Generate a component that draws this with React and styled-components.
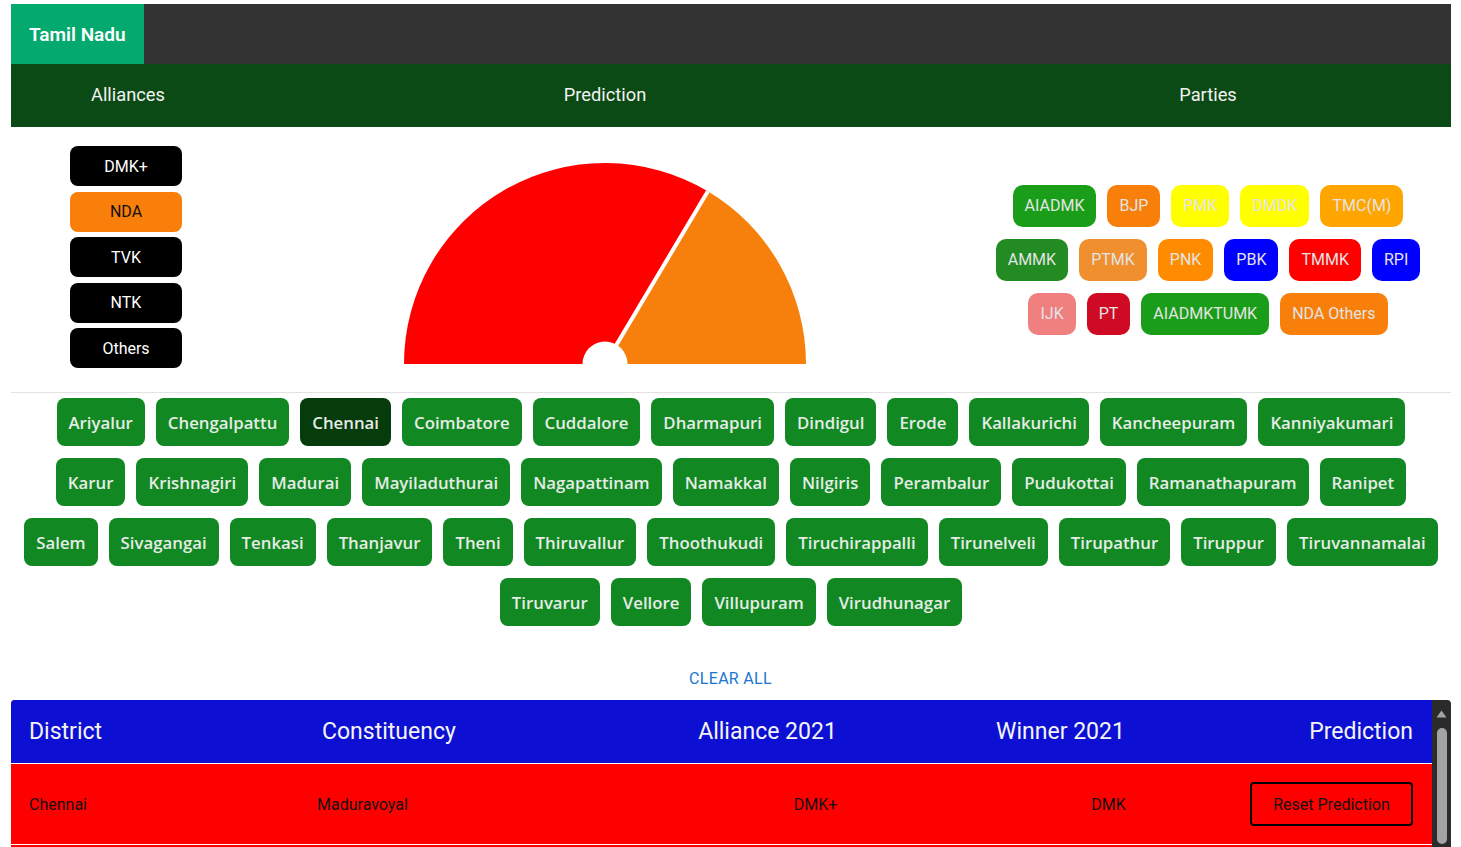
import React from "react";
import styled, { createGlobalStyle } from "styled-components";

const GlobalStyle = createGlobalStyle`
  html, body { margin: 0; padding: 0; overflow: hidden; background: #fff; }
  body { font-family: Roboto, "Liberation Sans", sans-serif; }
  * { box-sizing: border-box; }
`;

const Page = styled.div`
  width: 1461px;
  padding: 4px 10px 0 11px;
`;

const TopBar = styled.div`
  display: flex;
  height: 60px;
  background: #333333;
`;

const StateTab = styled.div`
  display: flex;
  align-items: center;
  padding: 0 18px;
  background: #04a96d;
  color: #fff;
  font-size: 19px;
  font-weight: 600;
`;

const Columns = styled.div`
  display: grid;
  grid-template-columns: 234px 720px 1fr;
`;

const NavBar = styled(Columns)`
  height: 63px;
  background: #0b4a14;
  align-items: center;
`;

const NavLabel = styled.div`
  text-align: center;
  color: #f2f2f2;
  font-size: 18.3px;
  margin-top: -2px;
`;

const Main = styled(Columns)`
  height: 266px;
  align-items: center;
  border-bottom: 1px solid #e2e2e2;
`;

const AllianceList = styled.div`
  display: flex;
  flex-direction: column;
  align-items: center;
  gap: 5.5px;
  padding-right: 4px;
  margin-top: -5px;
`;

const AllianceButton = styled.div`
  width: 112px;
  height: 40px;
  border-radius: 8px;
  display: flex;
  align-items: center;
  justify-content: center;
  background: ${(p) => p.$bg};
  color: ${(p) => p.$fg};
  font-size: 16px;
`;

const GaugeWrap = styled.div`
  display: flex;
  justify-content: center;
  padding-top: 8px;
`;

const PartyWrap = styled.div`
  display: flex;
  flex-wrap: wrap;
  justify-content: center;
  gap: 12px 11px;
  padding: 0 24px;
`;

const PartyPill = styled.div`
  height: 42px;
  padding: 0 12px;
  border-radius: 10px;
  display: flex;
  align-items: center;
  background: ${(p) => p.$bg};
  color: #e4e4e4;
  font-size: 16px;
`;

const Districts = styled.div`
  display: flex;
  flex-direction: column;
  gap: 12px;
  padding: 5px 10px 0;
`;

const DistrictRow = styled.div`
  display: flex;
  justify-content: center;
  gap: 11px;
`;

const DistrictButton = styled.div`
  height: 48px;
  padding: 0 12px;
  border-radius: 8px;
  display: flex;
  align-items: center;
  background: ${(p) => (p.$active ? "#063b0b" : "#118822")};
  color: #e6ece6;
  font-family: "Open Sans", "Noto Sans", sans-serif;
  font-weight: 600;
  font-size: 16.8px;
`;

const ClearRow = styled.div`
  display: flex;
  justify-content: center;
  margin-top: 34px;
  padding-right: 1px;
`;

const ClearButton = styled.div`
  height: 36px;
  display: flex;
  align-items: center;
  padding: 0 8px;
  color: #1976d2;
  font-size: 16px;
  letter-spacing: 0.3px;
  text-transform: uppercase;
`;

const TableFrame = styled.div`
  margin-top: 4px;
  display: flex;
  height: 147px;
  border-radius: 4px 4px 0 0;
  overflow: hidden;
`;

const TableMain = styled.div`
  flex: 1;
  display: flex;
  flex-direction: column;
  background: #ff0000;
`;

const HeadRow = styled.div`
  display: grid;
  grid-template-columns: 293px 293px 342px 244px 1fr;
  align-items: center;
  height: 64px;
  flex-shrink: 0;
  background: #0d10d2;
  border-bottom: 1px solid #fff;
  color: #f4f4f4;
  font-size: 23px;
`;

const HeadCell = styled.div`
  padding: 0 19px 0 18px;
  text-align: ${(p) => p.$align || "left"};
`;

const BodyRow = styled.div`
  display: grid;
  grid-template-columns: 288px 347px 340px 246px 1fr;
  align-items: center;
  height: 81px;
  flex-shrink: 0;
  background: #ff0000;
  border-bottom: 1px solid #fff;
  color: #111;
  font-size: 16px;
`;

const BodyCell = styled.div`
  padding: 0 19px 0 18px;
  display: flex;
  justify-content: ${(p) => p.$justify || "flex-start"};
`;

const ResetButton = styled.div`
  width: 163px;
  height: 44px;
  border: 2px solid #000;
  border-radius: 4px;
  display: flex;
  align-items: center;
  justify-content: center;
  color: #111;
  font-size: 16px;
`;

const ScrollTrack = styled.div`
  width: 19px;
  flex-shrink: 0;
  background: #2b2b2b;
  display: flex;
  flex-direction: column;
  align-items: center;
  padding-top: 10px;
`;

const ScrollThumb = styled.div`
  width: 10px;
  height: 116px;
  margin-top: 10px;
  border-radius: 5px;
  background: #a3a3a3;
`;

const alliances = [
  { name: "DMK+", bg: "#000", fg: "#fff" },
  { name: "NDA", bg: "#f77f0a", fg: "#111" },
  { name: "TVK", bg: "#000", fg: "#fff" },
  { name: "NTK", bg: "#000", fg: "#fff" },
  { name: "Others", bg: "#000", fg: "#fff" },
];

const parties = [
  ["AIADMK", "#1a9e1a"],
  ["BJP", "#f77f0a"],
  ["PMK", "#ffff00"],
  ["DMDK", "#ffff00"],
  ["TMC(M)", "#ffa500"],
  ["AMMK", "#228b22"],
  ["PTMK", "#f08f2e"],
  ["PNK", "#ff8c00"],
  ["PBK", "#0000ff"],
  ["TMMK", "#ff0000"],
  ["RPI", "#0000ff"],
  ["IJK", "#f08080"],
  ["PT", "#cf0a24"],
  ["AIADMKTUMK", "#1a9e1a"],
  ["NDA Others", "#f77f0a"],
];

const districtRows = [
  ["Ariyalur", "Chengalpattu", "Chennai", "Coimbatore", "Cuddalore", "Dharmapuri", "Dindigul", "Erode", "Kallakurichi", "Kancheepuram", "Kanniyakumari"],
  ["Karur", "Krishnagiri", "Madurai", "Mayiladuthurai", "Nagapattinam", "Namakkal", "Nilgiris", "Perambalur", "Pudukottai", "Ramanathapuram", "Ranipet"],
  ["Salem", "Sivagangai", "Tenkasi", "Thanjavur", "Theni", "Thiruvallur", "Thoothukudi", "Tiruchirappalli", "Tirunelveli", "Tirupathur", "Tiruppur", "Tiruvannamalai"],
  ["Tiruvarur", "Vellore", "Villupuram", "Virudhunagar"],
];

function Gauge({ segments }) {
  const r = 201;
  const cx = 202;
  const cy = 201;
  const total = segments.reduce((s, x) => s + x.value, 0);
  let angle = Math.PI;
  const paths = [];
  const cuts = [];
  segments.forEach((seg, i) => {
    const sweep = (seg.value / total) * Math.PI;
    const a0 = angle;
    const a1 = angle - sweep;
    const x0 = cx + r * Math.cos(a0);
    const y0 = cy - r * Math.sin(a0);
    const x1 = cx + r * Math.cos(a1);
    const y1 = cy - r * Math.sin(a1);
    paths.push(
      <path
        key={seg.name}
        d={`M${cx} ${cy} L${x0} ${y0} A${r} ${r} 0 0 1 ${x1} ${y1} Z`}
        fill={seg.color}
      />
    );
    if (i < segments.length - 1) cuts.push({ x: x1, y: y1 });
    angle = a1;
  });
  return (
    <svg width="404" height="201" viewBox="0 0 404 201">
      {paths}
      {cuts.map((c, i) => (
        <line key={i} x1={cx} y1={cy} x2={c.x} y2={c.y} stroke="#fff" strokeWidth="4" />
      ))}
      <circle cx={cx} cy={cy} r="22.5" fill="#fff" />
    </svg>
  );
}

export default function App() {
  return (
    <Page>
      <GlobalStyle />
      <TopBar>
        <StateTab>Tamil Nadu</StateTab>
      </TopBar>
      <NavBar>
        <NavLabel>Alliances</NavLabel>
        <NavLabel>Prediction</NavLabel>
        <NavLabel>Parties</NavLabel>
      </NavBar>
      <Main>
        <AllianceList>
          {alliances.map((a) => (
            <AllianceButton key={a.name} $bg={a.bg} $fg={a.fg}>
              {a.name}
            </AllianceButton>
          ))}
        </AllianceList>
        <GaugeWrap>
          <Gauge
            segments={[
              { name: "DMK+", value: 157, color: "#ff0000" },
              { name: "NDA", value: 77, color: "#f7800c" },
            ]}
          />
        </GaugeWrap>
        <PartyWrap>
          {parties.map(([n, c]) => (
            <PartyPill key={n} $bg={c}>
              {n}
            </PartyPill>
          ))}
        </PartyWrap>
      </Main>
      <Districts>
        {districtRows.map((row, i) => (
          <DistrictRow key={i}>
            {row.map((d) => (
              <DistrictButton key={d} $active={d === "Chennai"}>
                {d}
              </DistrictButton>
            ))}
          </DistrictRow>
        ))}
      </Districts>
      <ClearRow>
        <ClearButton>Clear All</ClearButton>
      </ClearRow>
      <TableFrame>
        <TableMain>
          <HeadRow>
            <HeadCell>District</HeadCell>
            <HeadCell>Constituency</HeadCell>
            <HeadCell $align="center">Alliance 2021</HeadCell>
            <HeadCell $align="center">Winner 2021</HeadCell>
            <HeadCell $align="right">Prediction</HeadCell>
          </HeadRow>
          <BodyRow>
            <BodyCell>Chennai</BodyCell>
            <BodyCell>Maduravoyal</BodyCell>
            <BodyCell $justify="center">DMK+</BodyCell>
            <BodyCell $justify="center">DMK</BodyCell>
            <BodyCell $justify="flex-end">
              <ResetButton>Reset Prediction</ResetButton>
            </BodyCell>
          </BodyRow>
        </TableMain>
        <ScrollTrack>
          <svg width="11" height="8" viewBox="0 0 11 8">
            <path d="M5.5 0.5 L10.5 7.5 L0.5 7.5 Z" fill="#a3a3a3" />
          </svg>
          <ScrollThumb />
        </ScrollTrack>
      </TableFrame>
    </Page>
  );
}
